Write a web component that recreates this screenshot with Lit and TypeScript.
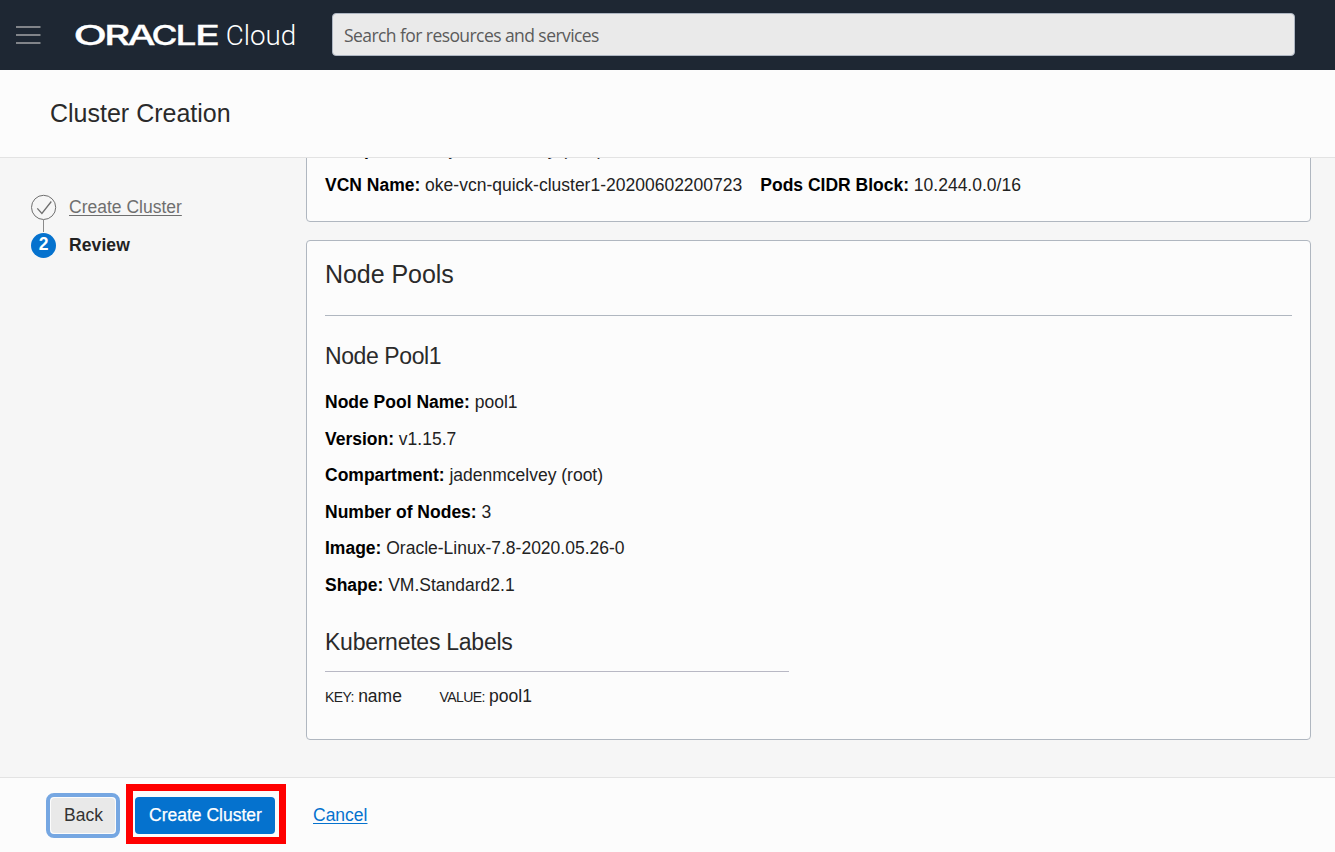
import { LitElement, html, css, svg } from "lit";
import { customElement, property } from "lit/decorators.js";

@customElement("detail-item")
class DetailItem extends LitElement {
  @property() label = "";
  @property() value = "";
  static styles = css`
    :host { display: block; white-space: nowrap; line-height: 20px; color: #222; }
    b { color: #000; }
    .value { margin-left: 4.8px; }
  `;
  render() {
    return html`<b>${this.label}:</b><span class="value">${this.value}</span>`;
  }
}

@customElement("top-bar")
class TopBar extends LitElement {
  static styles = css`
    :host { display: flex; align-items: center; height: 70px; background: #1e2733; box-sizing: border-box; padding: 0 40px 0 15px; }
    .menu { display: block; width: 26px; height: 20px; flex: none; }
    .brand { display: block; width: 230px; height: 40px; margin-left: 30px; flex: none; }
    .oracle { font-family: Inter, sans-serif; font-weight: 500; font-size: 26.5px; fill: #fff; stroke: #fff; stroke-width: 0.3px; }
    .cloud { font-family: Roboto, sans-serif; font-weight: 300; font-size: 28px; fill: #fff; }
    .search { flex: 1; margin: 0 0 2px 31px; height: 43px; box-sizing: border-box; border: 1px solid #aeb6c2; border-radius: 4px; background: #eaeaea; padding: 2px 11px 0; display: flex; align-items: center; color: #5b5b5b; font-family: "Open Sans", sans-serif; font-size: 17.5px; letter-spacing: -0.57px; }
  `;
  render() {
    const letters: [string, number, number][] = [
      ["O", 2.5, 33.5], ["R", 33.3, 26], ["A", 56.5, 28], ["C", 80.5, 26], ["L", 104.5, 21], ["E", 124, 25],
    ];
    return html`
      <svg class="menu" viewBox="0 0 26 20">
        <path d="M1 2H25.5M1 10H25.5M1 18H25.5" stroke="#a3a4a6" stroke-width="1.6" />
      </svg>
      <svg class="brand" viewBox="0 0 230 40">
        ${letters.map(([c, x, w]) => svg`<text class="oracle" x=${x} y="29.6" textLength=${w} lengthAdjust="spacingAndGlyphs">${c}</text>`)}
        <text class="cloud" x="154.8" y="29.8" textLength="70.5" lengthAdjust="spacingAndGlyphs">Cloud</text>
      </svg>
      <div class="search">Search for resources and services</div>
    `;
  }
}

@customElement("wizard-steps")
class WizardSteps extends LitElement {
  static styles = css`
    :host { display: flex; flex-direction: column; }
    .step { display: flex; align-items: center; height: 26px; gap: 12px; }
    .icon { display: block; width: 26px; height: 26px; flex: none; }
    .link { display: block; width: 1px; height: 12px; background: #8a8a8a; margin-left: 12px; }
    .done { color: #6f6f6f; text-decoration: underline; text-underline-offset: 2px; text-decoration-thickness: 1px; }
    .num { display: flex; align-items: center; justify-content: center; width: 25px; height: 25px; margin-right: 1px; border-radius: 50%; background: #0572ce; color: #fff; font-weight: bold; font-size: 17.5px; line-height: 1; box-sizing: border-box; padding-bottom: 1px; flex: none; }
    .current { font-weight: bold; color: #222; letter-spacing: 0.1px; }
  `;
  render() {
    return html`
      <div class="step">
        <svg class="icon" viewBox="0 0 26 26" fill="none" stroke="#6f6f6f">
          <circle cx="12.6" cy="13.4" r="12.1" />
          <path d="M6.3 14.4L10.9 19.5L20.3 7.5" stroke-width="1.3" />
        </svg>
        <span class="done">Create Cluster</span>
      </div>
      <span class="link"></span>
      <div class="step"><span class="num">2</span><span class="current">Review</span></div>
    `;
  }
}

@customElement("app-root")
class AppRoot extends LitElement {
  static styles = css`
    :host { display: flex; flex-direction: column; height: 852px; overflow: hidden; background: #f6f6f6; font-family: "Liberation Sans", Arial, sans-serif; font-size: 17.5px; color: #222; }
    top-bar { flex: none; }
    .title { flex: none; height: 88px; box-sizing: border-box; border-bottom: 1px solid #e3e3e3; background: #fcfcfc; padding-left: 50px; display: flex; align-items: center; font-size: 25px; color: #2a2a2a; }
    .main { flex: 1; min-height: 0; display: flex; overflow: hidden; }
    wizard-steps { width: 275px; flex: none; margin-left: 31px; padding-top: 36px; }
    .cards { width: 1005px; display: flex; flex-direction: column; gap: 18px; margin-top: -60px; }
    .card { flex: none; box-sizing: border-box; border: 1px solid #b0b7c0; border-radius: 4px; background: #fcfcfc; padding: 0 18px; }
    .info { height: 124px; display: flex; flex-direction: column; justify-content: flex-end; gap: 16.5px; padding-bottom: 26px; }
    .pair { display: flex; gap: 18px; }
    .pools { height: 500px; }
    h2, h3 { font-weight: normal; margin: 0; white-space: nowrap; color: #2a2a2a; }
    h2 { font-size: 25px; line-height: 30px; padding: 18px 0 26px; border-bottom: 1px solid #b0b7c0; letter-spacing: -0.05px; }
    h3 { font-size: 23px; line-height: 28px; letter-spacing: -0.25px; }
    .pool { margin-top: 26px; letter-spacing: -0.4px; }
    .rows { display: flex; flex-direction: column; gap: 16.5px; margin-top: 22px; }
    .labels { margin-top: 33px; width: 464px; padding-bottom: 15px; border-bottom: 1px solid #b8b8c4; }
    .tags { display: flex; gap: 37.5px; margin-top: 14px; line-height: 20px; }
    .small { font-size: 14px; letter-spacing: -0.55px; margin-right: 4.2px; }
    .footer { flex: none; height: 75px; box-sizing: border-box; border-top: 1px solid #e3e3e3; background: #fcfcfc; display: flex; align-items: center; padding: 0 0 1px 46px; }
    .btn { font: inherit; border: 0; padding: 0; margin: 0; border-radius: 4px; height: 37px; box-sizing: border-box; white-space: nowrap; }
    .ring { width: 74px; height: 45px; box-sizing: border-box; border: 4px solid #76a7e2; border-radius: 8px; display: flex; align-items: center; justify-content: center; flex: none; margin-top: 2px; }
    .back { width: 64px; height: 35px; background: #e9e9e9; color: #333; padding-left: 1px; }
    .mark { width: 160px; height: 60px; box-sizing: border-box; border: 7px solid #f00; margin: 0 0 1px 6px; display: flex; align-items: center; justify-content: center; flex: none; padding: 3px 2px 0 0; }
    .create { width: 140px; padding-left: 1px; background: #0572ce; color: #fff; -webkit-text-stroke: 0.25px #fff; }
    .cancel { margin: 2px 0 0 27px; color: #0572ce; text-decoration: underline; text-underline-offset: 2px; text-decoration-thickness: 1px; }
  `;

  private details: [string, string][] = [
    ["Node Pool Name", "pool1"],
    ["Version", "v1.15.7"],
    ["Compartment", "jadenmcelvey (root)"],
    ["Number of Nodes", "3"],
    ["Image", "Oracle-Linux-7.8-2020.05.26-0"],
    ["Shape", "VM.Standard2.1"],
  ];

  render() {
    return html`
      <top-bar></top-bar>
      <div class="title">Cluster Creation</div>
      <div class="main">
        <wizard-steps></wizard-steps>
        <div class="cards">
          <section class="card info">
            <detail-item label="Compartment" value="jadenmcelvey (root)"></detail-item>
            <div class="pair">
              <detail-item label="VCN Name" value="oke-vcn-quick-cluster1-20200602200723"></detail-item>
              <detail-item label="Pods CIDR Block" value="10.244.0.0/16"></detail-item>
            </div>
          </section>
          <section class="card pools">
            <h2>Node Pools</h2>
            <h3 class="pool">Node Pool1</h3>
            <div class="rows">
              ${this.details.map(([l, v]) => html`<detail-item label=${l} value=${v}></detail-item>`)}
            </div>
            <h3 class="labels">Kubernetes Labels</h3>
            <div class="tags">
              <span><span class="small">KEY:</span>name</span>
              <span><span class="small">VALUE:</span>pool1</span>
            </div>
          </section>
        </div>
      </div>
      <div class="footer">
        <div class="ring"><button class="btn back">Back</button></div>
        <div class="mark"><button class="btn create">Create Cluster</button></div>
        <a class="cancel">Cancel</a>
      </div>
    `;
  }
}
